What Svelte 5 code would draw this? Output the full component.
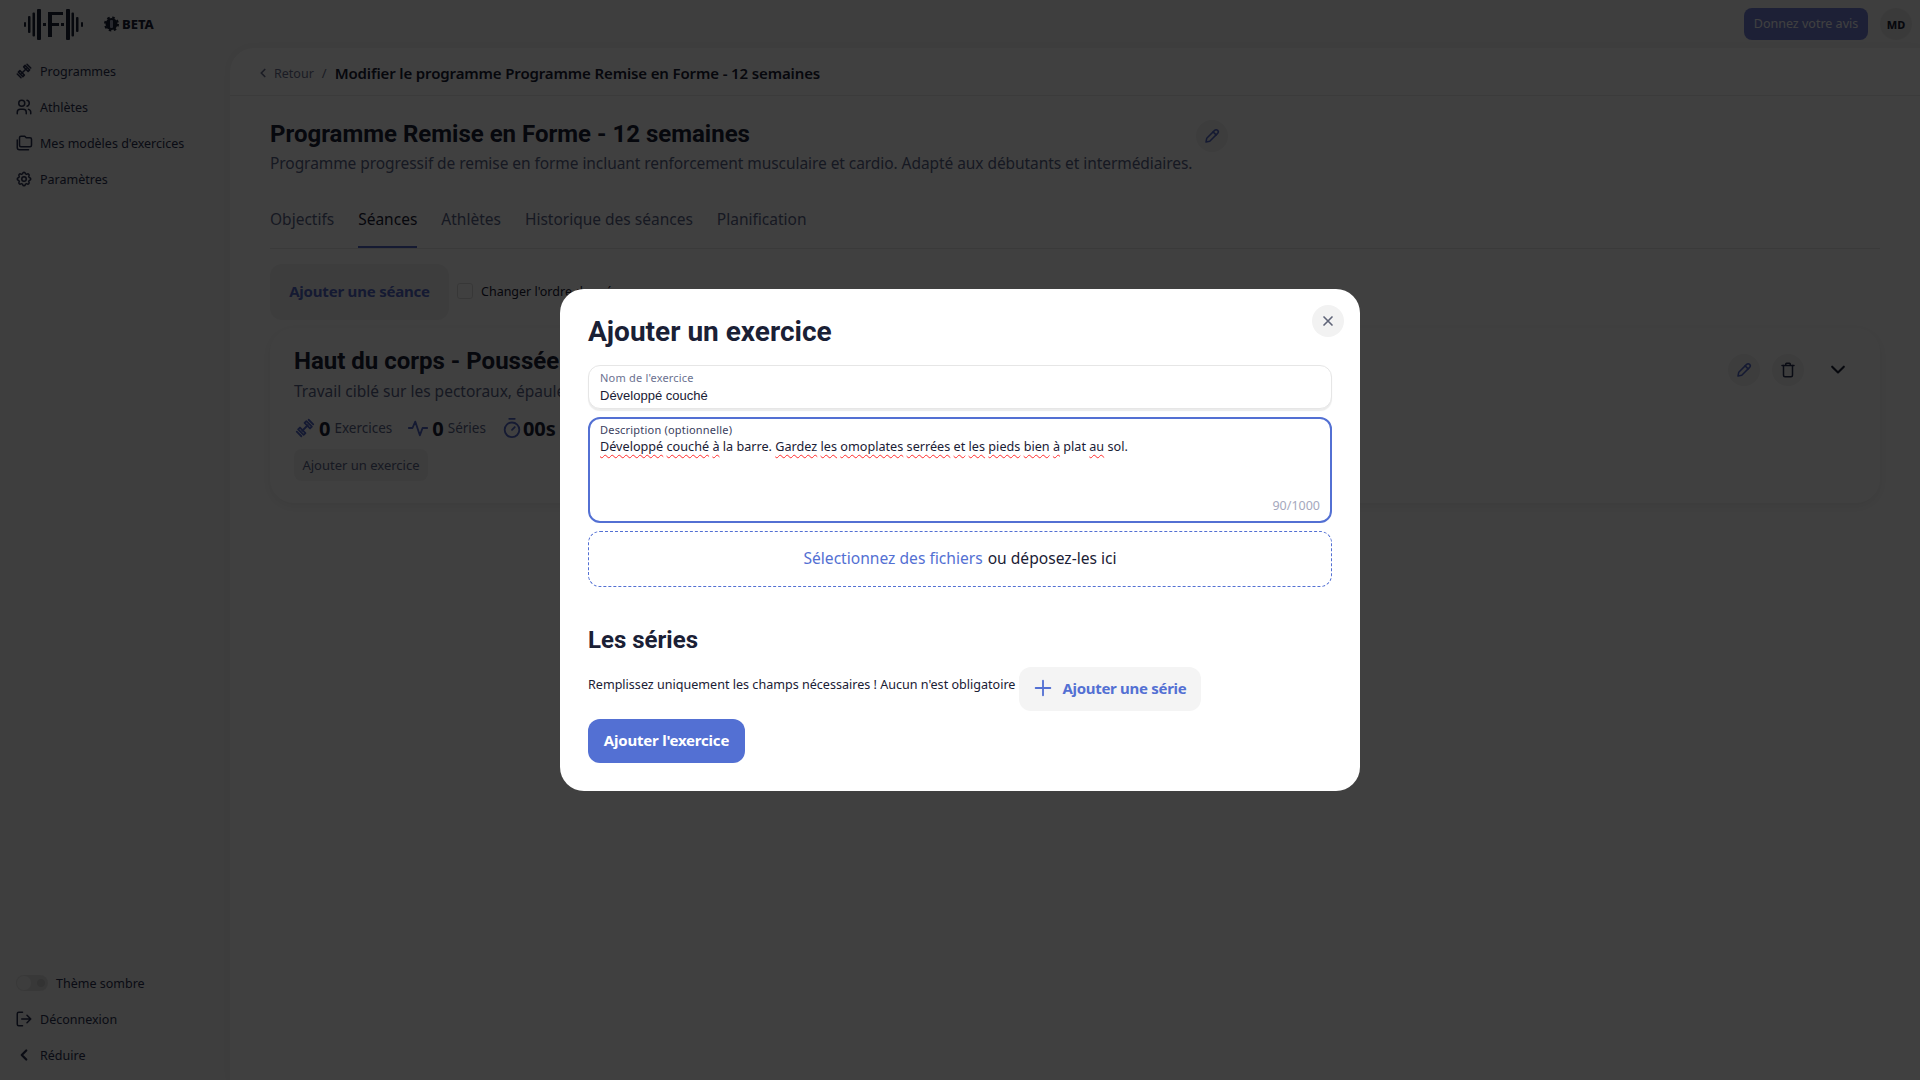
<script lang="ts">
  const navTop = [
    { icon: "dumbbell", label: "Programmes" },
    { icon: "users", label: "Athlètes" },
    { icon: "folders", label: "Mes modèles d'exercices" },
    { icon: "gear", label: "Paramètres" },
  ];
  const tabs = ["Objectifs", "Séances", "Athlètes", "Historique des séances", "Planification"];
  const bars = [
    { x: 0, w: 2, h: 5 }, { x: 4, w: 2.500, h: 17 }, { x: 8.500, w: 2.500, h: 24 }, { x: 13, w: 4, h: 31 },
    { x: 42, w: 4, h: 31 }, { x: 47.500, w: 2.500, h: 24 }, { x: 52, w: 2.500, h: 15 }, { x: 57, w: 2, h: 5 },
  ];
  // mots soulignés par le correcteur orthographique
  const desc: [string, boolean][] = [
    ["Développé", true], [" ", false], ["couché", true], [" ", false], ["à", true],
    [" la barre. ", false], ["Gardez", true], [" ", false], ["les", true], [" ", false],
    ["omoplates", true], [" ", false], ["serrées", true], [" ", false], ["et", true], [" ", false],
    ["les", true], [" ", false], ["pieds", true], [" ", false], ["bien", true], [" ", false],
    ["à", true], [" plat ", false], ["au", true], [" sol.", false],
  ];
</script>

{#snippet icon(name: string, size = 18)}
  <svg class="ic" width={size} height={size} viewBox="0 0 24 24" fill="none" stroke="currentColor" stroke-width="2" stroke-linecap="round" stroke-linejoin="round">
    {#if name === "dumbbell"}
      <path d="M9 15l6 -6" />
      <path d="M4.500 13.500l6 6l2 -2l-6 -6z" />
      <path d="M11.500 6.500l6 6l2 -2l-6 -6z" />
      <path d="M3 16l5 5M16 3l5 5" />
    {:else if name === "users"}
      <path d="M9 7m-4 0a4 4 0 1 0 8 0a4 4 0 1 0 -8 0" />
      <path d="M3 21v-2a4 4 0 0 1 4 -4h4a4 4 0 0 1 4 4v2" />
      <path d="M16 3.130a4 4 0 0 1 0 7.750" />
      <path d="M21 21v-2a4 4 0 0 0 -3 -3.850" />
    {:else if name === "folders"}
      <path d="M8 17h12a2 2 0 0 0 2 -2v-8a2 2 0 0 0 -2 -2h-5l-2 -2h-5a2 2 0 0 0 -2 2v10a2 2 0 0 0 2 2z" />
      <path d="M3 8v10a3 3 0 0 0 3 3h12" />
    {:else if name === "gear"}
      <path d="M10.325 4.317c.426 -1.756 2.924 -1.756 3.350 0a1.724 1.724 0 0 0 2.573 1.066c1.543 -.94 3.310 .826 2.370 2.370a1.724 1.724 0 0 0 1.065 2.572c1.756 .426 1.756 2.924 0 3.350a1.724 1.724 0 0 0 -1.066 2.573c.94 1.543 -.826 3.310 -2.370 2.370a1.724 1.724 0 0 0 -2.572 1.065c-.426 1.756 -2.924 1.756 -3.350 0a1.724 1.724 0 0 0 -2.573 -1.066c-1.543 .94 -3.310 -.826 -2.370 -2.370a1.724 1.724 0 0 0 -1.065 -2.572c-1.756 -.426 -1.756 -2.924 0 -3.350a1.724 1.724 0 0 0 1.066 -2.573c-.94 -1.543 .826 -3.310 2.370 -2.370c1 .608 2.296 .07 2.572 -1.065z" />
      <circle cx="12" cy="12" r="3" />
    {:else if name === "logout"}
      <path d="M10 3h-5a2 2 0 0 0 -2 2v14a2 2 0 0 0 2 2h5" />
      <path d="M9 12h12M16 7l5 5l-5 5" />
    {:else if name === "chevron-left"}
      <path d="M15 6l-6 6l6 6" stroke-width="3" />
    {:else if name === "chevron-down"}
      <path d="M5 8l7 7l7 -7" stroke-width="2.500" />
    {:else if name === "pencil"}
      <path d="M4 20l1 -5l10.500 -10.500a2.500 2.500 0 0 1 4 4l-10.500 10.500z" />
      <path d="M13.500 6.500l4 4" />
    {:else if name === "trash"}
      <path d="M4 6h16M9 6v-2a1 1 0 0 1 1 -1h4a1 1 0 0 1 1 1v2" />
      <path d="M6 6v13a2 2 0 0 0 2 2h8a2 2 0 0 0 2 -2v-13" />
    {:else if name === "pulse"}
      <path d="M2 12h4l3 -7l5 15l3 -8h5" />
    {:else if name === "timer"}
      <path d="M9 2h6" />
      <circle cx="12" cy="14" r="8" />
      <path d="M12 14l3 -3" />
    {:else if name === "close"}
      <path d="M6 6l12 12M18 6l-12 12" stroke-width="2.500" />
    {:else if name === "plus"}
      <path d="M12 4v16M4 12h16" />
    {/if}
  </svg>
{/snippet}

<div class="page">
  <header class="topbar">
    <div class="brand">
      <svg class="logo" width="60" height="31" viewBox="0 0 60 31" fill="currentColor">
        {#each bars as b}
          <rect x={b.x} y={15.500 - b.h / 2} width={b.w} height={b.h} rx="1" />
        {/each}
        <rect x="24" y="3" width="4" height="25" />
        <rect x="24" y="3" width="15" height="3" />
        <rect x="24" y="14" width="11" height="3" />
        <rect x="19" y="14" width="3" height="3" />
        <rect x="37" y="14" width="3" height="3" />
      </svg>
      <span class="beta">
        <svg width="15" height="16" viewBox="0 0 15 16">
          <circle cx="7.500" cy="8" r="6" fill="currentColor" />
          <circle cx="7.500" cy="8" r="6.500" fill="none" stroke="currentColor" stroke-width="2" stroke-dasharray="2.500 2.600" />
          <rect x="6" y="4" width="3" height="8" rx="1" fill="#9aa0b8" />
        </svg>
        BETA
      </span>
    </div>
    <div class="top-right">
      <button class="feedback">Donnez votre avis</button>
      <span class="avatar">MD</span>
    </div>
  </header>

  <div class="body">
    <aside class="sidebar">
      <nav class="nav">
        {#each navTop as item}
          <div class="nav-item">{@render icon(item.icon)}<span>{item.label}</span></div>
        {/each}
      </nav>
      <div class="nav bottom">
        <div class="nav-item theme"><span class="switch"><span class="knob"></span><span class="sun"></span></span><span>Thème sombre</span></div>
        <div class="nav-item">{@render icon("logout")}<span>Déconnexion</span></div>
        <div class="nav-item">{@render icon("chevron-left")}<span>Réduire</span></div>
      </div>
    </aside>

    <main class="main">
      <div class="crumbs">
        <span class="back">{@render icon("chevron-left", 14)}Retour</span>
        <span class="slash">/</span>
        <strong>Modifier le programme Programme Remise en Forme - 12 semaines</strong>
      </div>

      <div class="content">
        <section class="head">
          <div>
            <h1>Programme Remise en Forme - 12 semaines</h1>
            <p class="sub">Programme progressif de remise en forme incluant renforcement musculaire et cardio. Adapté aux débutants et intermédiaires.</p>
          </div>
          <button class="round indigo">{@render icon("pencil", 18)}</button>
        </section>

        <div class="tabs">
          {#each tabs as tab}
            <span class="tab" class:active={tab === "Séances"}>{tab}</span>
          {/each}
        </div>

        <div class="toolbar">
          <button class="add-session">Ajouter une séance</button>
          <label class="check"><span class="box"></span>Changer l'ordre des séances</label>
        </div>

        <article class="card">
          <div class="card-main">
            <h2>Haut du corps - Poussée</h2>
            <p class="card-sub">Travail ciblé sur les pectoraux, épaules et triceps.</p>
            <div class="stats">
              <span class="stat">{@render icon("dumbbell", 22)}<b>0</b><em>Exercices</em></span>
              <span class="stat">{@render icon("pulse", 22)}<b>0</b><em>Séries</em></span>
              <span class="stat tight">{@render icon("timer", 22)}<b>00s</b></span>
            </div>
            <button class="add-ex">Ajouter un exercice</button>
          </div>
          <div class="card-actions">
            <button class="round indigo">{@render icon("pencil", 18)}</button>
            <button class="round">{@render icon("trash", 18)}</button>
            <span class="chev">{@render icon("chevron-down", 20)}</span>
          </div>
        </article>
      </div>
    </main>
  </div>
</div>

<div class="scrim">
  <div class="modal">
    <button class="close">{@render icon("close", 16)}</button>
    <h3>Ajouter un exercice</h3>

    <div class="field name">
      <span class="label">Nom de l'exercice</span>
      <span class="value">Développé couché</span>
    </div>

    <div class="field area">
      <span class="label dark">Description (optionnelle)</span>
      <div class="area-text">
        {#each desc as [word, bad]}<span class:bad>{word}</span>{/each}
      </div>
      <span class="count">90/1000</span>
    </div>

    <div class="drop"><span class="link">Sélectionnez des fichiers</span> ou déposez-les ici</div>

    <h4>Les séries</h4>
    <div class="series-row">
      <span class="hint">Remplissez uniquement les champs nécessaires ! Aucun n'est obligatoire</span>
      <button class="add-serie">{@render icon("plus", 22)}Ajouter une série</button>
    </div>
    <button class="submit">Ajouter l'exercice</button>
  </div>
</div>

<style>
  :global(body) {
    margin: 0;
    background: #fff;
    font-family: "Noto Sans", "Open Sans", sans-serif;
    color: #1a2035;
  }
  .page {
    height: 1080px;
    overflow: hidden;
    display: flex;
    flex-direction: column;
    background: #f5f5f5;
  }
  .topbar {
    height: 48px;
    flex: none;
    display: flex;
    align-items: center;
    justify-content: space-between;
    padding: 0 8px 0 24px;
  }
  .brand {
    display: flex;
    align-items: center;
    gap: 20px;
    color: #1a2035;
  }
  .beta {
    display: flex;
    align-items: center;
    gap: 3px;
    font-size: 13px;
    font-weight: 800;
  }
  .top-right {
    display: flex;
    align-items: center;
    gap: 12px;
  }
  .feedback {
    height: 32px;
    width: 124px;
    border: none;
    border-radius: 8px;
    background: #7380d8;
    color: #fff;
    font: 12.500px "Noto Sans", sans-serif;
    padding: 0 0 2px;
  }
  .avatar {
    width: 32px;
    height: 32px;
    border-radius: 50%;
    background: #e8e8e8;
    display: grid;
    place-items: center;
    font-size: 11px;
    font-weight: 800;
  }
  .body {
    flex: 1;
    display: flex;
    min-height: 0;
  }
  .sidebar {
    width: 230px;
    flex: none;
    display: flex;
    flex-direction: column;
    justify-content: space-between;
    padding: 5px 0 7px;
  }
  .nav-item {
    height: 36px;
    display: flex;
    align-items: center;
    gap: 7px;
    padding-left: 15px;
    font-size: 12.500px;
    color: #2a3050;
  }
  .nav-item.theme {
    gap: 8px;
    padding-left: 16px;
  }
  .ic {
    flex: none;
  }
  .switch {
    width: 32px;
    height: 16px;
    border-radius: 8px;
    background: #e0e0e0;
    display: flex;
    align-items: center;
    justify-content: space-between;
  }
  .knob {
    display: block;
    width: 14px;
    height: 14px;
    margin: 1px;
    border-radius: 50%;
    background: #f4f4f4;
  }
  .sun {
    width: 8px;
    height: 8px;
    margin-right: 3px;
    border-radius: 50%;
    background: #c9c9c9;
  }
  .main {
    flex: 1;
    background: #fff;
    border-top-left-radius: 24px;
    box-shadow: 0 0 8px rgba(0, 0, 0, 0.04);
    min-width: 0;
  }
  .crumbs {
    height: 45px;
    padding-top: 2px;
    display: flex;
    align-items: center;
    gap: 8px;
    padding-left: 26px;
    border-bottom: 1px solid #ececec;
    font-size: 13px;
  }
  .back {
    display: flex;
    align-items: center;
    gap: 4px;
    margin-top: 1px;
    color: #6b7190;
    font-size: 12.500px;
  }
  .slash {
    color: #6b7190;
  }
  .crumbs strong {
    font-size: 15px;
    font-weight: 600;
    letter-spacing: -0.13px;
  }
  .content {
    padding: 23px 40px 0;
  }
  .head {
    display: flex;
    align-items: flex-start;
    gap: 4px;
  }
  h1 {
    margin: 0;
    font-family: Roboto, sans-serif;
    font-size: 24px;
    line-height: 30px;
    font-weight: 700;
  }
  .sub {
    margin: 4px 0 0;
    font-size: 15.500px;
    line-height: 20px;
    letter-spacing: -0.066px;
    color: #5a6488;
  }
  .round {
    width: 32px;
    height: 32px;
    flex: none;
    padding: 0;
    border: none;
    border-radius: 50%;
    background: #f2f2f2;
    color: #2a3050;
    display: grid;
    place-items: center;
  }
  .round.indigo {
    color: #5468c8;
  }
  .head .round {
    margin-top: 1px;
  }
  .tabs {
    display: flex;
    gap: 24px;
    margin-top: 23px;
    height: 52px;
    border-bottom: 1px solid #e6e6e6;
  }
  .tab {
    font-size: 15.500px;
    line-height: 47px;
    color: #5a6488;
    height: 52px;
    box-sizing: border-box;
  }
  .tab.active {
    color: #1a2035;
    border-bottom: 2px solid #5468c8;
  }
  .toolbar {
    display: flex;
    align-items: center;
    gap: 8px;
    margin-top: 15px;
  }
  .add-session {
    width: 179px;
    height: 56px;
    border: none;
    border-radius: 12px;
    background: #f2f2f2;
    color: #5468c8;
    font: 700 15px "Noto Sans", sans-serif;
    letter-spacing: -0.2px;
    padding: 0 0 2px;
  }
  .check {
    display: flex;
    align-items: center;
    gap: 8px;
    margin-top: -2px;
    font-size: 12.500px;
  }
  .box {
    width: 14px;
    height: 14px;
    border-radius: 3px;
    border: 1px solid #dcdcdc;
  }
  .card {
    margin-top: 8px;
    height: 175px;
    box-sizing: border-box;
    border-radius: 24px;
    background: #fff;
    box-shadow: 0 3px 12px rgba(0, 0, 0, 0.08);
    padding: 18px 24px;
    display: flex;
    justify-content: space-between;
  }
  h2 {
    margin: 0;
    font-family: Roboto, sans-serif;
    font-size: 24px;
    line-height: 30px;
    font-weight: 700;
  }
  .card-sub {
    margin: 4px 0 0;
    font-size: 15.500px;
    line-height: 22px;
    color: #5a6488;
  }
  .stats {
    display: flex;
    gap: 15px;
    margin-top: 12px;
    height: 28px;
    align-items: center;
  }
  .stat {
    display: flex;
    align-items: center;
    gap: 3px;
    color: #5468c8;
  }
  .stat.tight {
    gap: 0;
  }
  .stat b {
    font-size: 20px;
    color: #1a2035;
  }
  .stat em {
    font-style: normal;
    font-size: 13.500px;
    margin-left: 1px;
    color: #5a6488;
  }
  .add-ex {
    margin-top: 7px;
    height: 32px;
    width: 134px;
    padding: 0;
    border: none;
    border-radius: 8px;
    background: #f2f2f2;
    color: #5a6488;
    font: 13px "Noto Sans", sans-serif;
  }
  .card-actions {
    display: flex;
    align-items: center;
    gap: 12px;
    height: 32px;
    margin-top: 8px;
    padding-right: 2px;
  }
  .chev {
    width: 32px;
    margin-left: 6px;
    display: grid;
    place-items: center;
  }
  .scrim {
    position: fixed;
    inset: 0;
    background: rgba(0, 0, 0, 0.75);
  }
  .modal {
    position: absolute;
    left: 560px;
    top: 289px;
    width: 800px;
    height: 502px;
    box-sizing: border-box;
    background: #fff;
    border-radius: 24px;
    padding: 22px 28px;
  }
  .close {
    position: absolute;
    top: 16px;
    right: 16px;
    width: 32px;
    height: 32px;
    border: none;
    border-radius: 50%;
    background: #f2f2f2;
    color: #5f6478;
    padding: 0;
    display: grid;
    place-items: center;
  }
  h3 {
    margin: 0;
    font-family: Roboto, sans-serif;
    font-size: 28px;
    line-height: 42px;
    font-weight: 700;
    color: #1a2035;
  }
  .field {
    box-sizing: border-box;
    display: flex;
    flex-direction: column;
    padding: 0 11px;
    background: #fff;
    border-radius: 12px;
  }
  .name {
    height: 44px;
    margin-top: 12px;
    border: 1px solid #e6e6e6;
    box-shadow: 0 2px 1px rgba(0, 0, 0, 0.08);
    padding-top: 5px;
  }
  .label {
    font-size: 11px;
    line-height: 13px;
    letter-spacing: 0.2px;
    color: #6b7190;
  }
  .label.dark {
    color: #3a4060;
  }
  .value {
    margin-top: 3px;
    font: 13px/17px "Liberation Sans", Arial, sans-serif;
    color: #1a2035;
  }
  .area {
    position: relative;
    height: 106px;
    margin-top: 8px;
    border: 2px solid #5370d3;
    padding: 4px 10px 0;
  }
  .area-text {
    margin-top: 2px;
    font-size: 12.650px;
    line-height: 17px;
    color: #1a2035;
  }
  .bad {
    text-decoration: underline wavy #ff2b2b 1.200px;
    text-underline-offset: 3px;
    text-decoration-skip-ink: none;
  }
  .count {
    position: absolute;
    right: 10px;
    bottom: 8px;
    font-size: 12.500px;
    line-height: 14px;
    color: #a5a8bd;
  }
  .drop {
    height: 56px;
    box-sizing: border-box;
    margin-top: 8px;
    padding-bottom: 2px;
    border: 1px dashed #5370d3;
    border-radius: 12px;
    display: flex;
    align-items: center;
    justify-content: center;
    gap: 5px;
    font-size: 15.600px;
    color: #1a2035;
  }
  .link {
    color: #5370d3;
  }
  h4 {
    margin: 38px 0 0;
    font-family: Roboto, sans-serif;
    font-size: 24px;
    line-height: 30px;
    font-weight: 700;
    color: #1a2035;
  }
  .series-row {
    display: flex;
    align-items: flex-start;
    gap: 4px;
    margin-top: 12px;
  }
  .hint {
    font-size: 12.570px;
    line-height: 36px;
  }
  .add-serie {
    height: 44px;
    width: 182px;
    padding: 0 2px 2px 0;
    border: none;
    border-radius: 12px;
    background: #f4f4f4;
    color: #5370d3;
    font: 700 15px "Noto Sans", sans-serif;
    letter-spacing: -0.3px;
    display: flex;
    align-items: center;
    justify-content: center;
    gap: 8px;
  }
  .submit {
    display: block;
    margin-top: 8px;
    height: 44px;
    width: 157px;
    padding: 0 0 2px;
    border: none;
    border-radius: 12px;
    background: #5370d3;
    color: #fff;
    font: 700 15px "Noto Sans", sans-serif;
    letter-spacing: -0.2px;
  }
</style>
